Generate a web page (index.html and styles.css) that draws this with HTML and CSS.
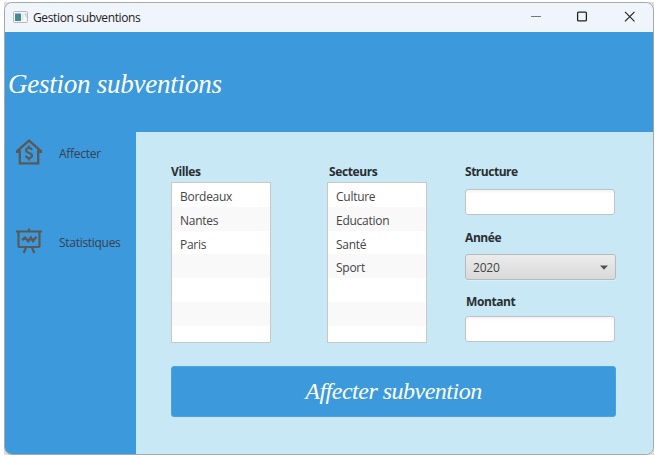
FILE: index.html
```html
<!DOCTYPE html>
<html lang="fr">
<head>
<meta charset="utf-8">
<title>Gestion subventions</title>
<link rel="stylesheet" href="styles.css">
</head>
<body>
<div class="desktop">
<div class="window">
  <div class="titlebar">
    <svg class="app-icon" width="15" height="12" viewBox="0 0 15 12"><defs><linearGradient id="g" x1="0" y1="0" x2="1" y2="1"><stop offset="0" stop-color="#4a7fb0"/><stop offset="1" stop-color="#3f9468"/></linearGradient></defs><rect x=".5" y=".5" width="14" height="11" rx="1" fill="#f4f6f8" stroke="#b4b8be"/><rect x="2" y="2.5" width="6" height="7.5" fill="url(#g)"/><rect x="9" y="2.5" width="1.5" height="7" fill="#dfe6ee"/><path d="M11.5 2.5h2v5z" fill="#a9d3c0"/></svg>
    <span class="caption">Gestion subventions</span>
    <svg class="controls" width="106" height="12" viewBox="0 0 106 12" fill="none"><path d="M1 5.500h10" stroke="#777"/><rect x="47.6" y="1.1" width="8.8" height="8.8" rx="1" stroke="#222" stroke-width="1.3"/><path d="M95 .8l9.500 9.500M104.500 .8l-9.500 9.500" stroke="#222" stroke-width="1.2"/></svg>
  </div>
  <div class="banner"><h1 class="script heading">Gestion subventions</h1></div>
  <div class="body">
    <nav class="sidebar">
      <div class="nav-item">
        <svg width="28" height="28" viewBox="0 0 28 28" fill="none" stroke="#595959" stroke-width="2.3"><path d="M1.5 13.7L14 2.6l12.5 11.1M4.8 12v13.4h18.4V12M1 13.8h4.5M22.5 13.8h4.5"/><path d="M17 11.8c-.5-1.3-1.5-1.8-3-1.8-1.8 0-2.9.9-2.9 2.3 0 3.6 6 1.700 6 5.300 0 1.500-1.200 2.400-3.100 2.400-1.700 0-2.800-.7-3.200-2.200M14 7.500V10M14 20v2.500" stroke-width="2.100"/></svg>
        <span>Affecter</span>
      </div>
      <div class="nav-item">
        <svg width="28" height="28" viewBox="0 0 28 28" fill="none" stroke="#595959" stroke-width="2.200"><path d="M1 4.500h26M14 1.500v3M3.500 4.500v14.500q0 1 1 1h19q1 0 1-1V4.500M11 20.500l-2.300 5.500M17 20.500l2.300 5.500"/><path d="M7 13l3-2.300 3.300 3.300 2.500-3.300 2.200 3.300 3.500-4.300" stroke-width="2.500"/></svg>
        <span>Statistiques</span>
      </div>
    </nav>
    <main class="panel">
      <div class="form">
        <section class="column">
          <label class="lbl">Villes</label>
          <ul class="list"><li>Bordeaux</li><li>Nantes</li><li>Paris</li><li></li><li></li><li></li><li></li></ul>
        </section>
        <section class="column">
          <label class="lbl indent">Secteurs</label>
          <ul class="list"><li>Culture</li><li>Education</li><li>Santé</li><li>Sport</li><li></li><li></li><li></li></ul>
        </section>
        <section class="fields">
          <label class="lbl structure">Structure</label>
          <div class="input"></div>
          <label class="lbl annee">Année</label>
          <div class="combo"><span>2020</span><svg width="8" height="5" viewBox="0 0 8 5"><path d="M0 .5h8L4 4.700z" fill="#505050"/></svg></div>
          <label class="lbl montant">Montant</label>
          <div class="input"></div>
        </section>
      </div>
      <button class="script submit">Affecter subvention</button>
    </main>
  </div>
</div>
</div>
</body>
</html>
```
FILE: styles.css
```css
* { box-sizing: border-box; }
body { margin: 0; background: #fff; overflow: hidden; font-family: "Segoe UI", "Open Sans", sans-serif; font-size: 12px; color: #333; }
.desktop { margin: 2px 1px 0 4px; height: 453px; background: #ddd; }
.window { height: 453px; border: 1px solid #a5a9ac; border-radius: 8px; overflow: hidden; background: #c8e8f5; }
.titlebar { height: 29px; display: flex; align-items: center; background: #f0f4fb; padding: 0 17px 1px 8px; }
.app-icon { flex: none; }
.caption { margin-left: 5px; font-size: 12px; letter-spacing: -.36px; color: #222; white-space: nowrap; }
.controls { margin-left: auto; }
.banner { height: 100px; background: #3c99dc; padding: 32px 0 0 3px; }
.script { font-family: "Monotype Corsiva", "Liberation Serif", serif; font-style: italic; font-weight: 400; color: #fff; white-space: nowrap; }
.heading { margin: 0; font-size: 27px; line-height: 40px; letter-spacing: -.24px; }
.body { display: flex; height: 322px; }
.sidebar { width: 131px; background: #3c99dc; padding: 6px 0 0 10px; display: flex; flex-direction: column; gap: 61px; }
.nav-item { display: flex; align-items: center; height: 28px; gap: 16px; color: #36424d; letter-spacing: -.29px; }
.nav-item span { padding-top: 2px; }
.panel { flex: 1; background: #c8e8f5; padding: 30px 37px 0 35px; }
.form { display: flex; height: 204px; }
.column { width: 100px; margin-right: 56px; }
.column + .column { margin-right: 38px; }
.lbl { display: block; height: 20px; line-height: 19px; font-weight: 700; letter-spacing: -.4px; color: #292e31; }
.indent { padding-left: 2px; }
.list { list-style: none; margin: 0; padding: 0; height: 161px; background: #fff; border: 1px solid #c8c8c8; overflow: hidden; }
.list li { height: 23.8px; line-height: 28px; padding-left: 8px; color: #444; letter-spacing: -.27px; }
.list li:nth-child(even) { background: #f9f9f9; }
.fields { width: 151px; }
.structure { margin-bottom: 7px; letter-spacing: -.48px; }
.annee { margin-top: 13px; margin-bottom: 6px; }
.montant { margin-top: 12px; margin-bottom: 4px; padding-left: 1px; }
.input { width: 150px; height: 26px; border: 1px solid #bfc3c5; border-radius: 3px; background: linear-gradient(#f3f3f3, #fff 4px); }
.combo { height: 26px; border: 1px solid #b7babb; border-radius: 3px; background: linear-gradient(#ececec, #d9d9d9); display: flex; align-items: center; justify-content: space-between; padding: 0 7px; color: #444; letter-spacing: -.2px; box-shadow: 0 1px #dceff6; }
.submit { display: block; width: 445px; height: 51px; border: 1px solid #4ba3de; border-radius: 3px; background: #3c99dc; font-size: 24px; padding: 0; letter-spacing: -.5px; }
```
